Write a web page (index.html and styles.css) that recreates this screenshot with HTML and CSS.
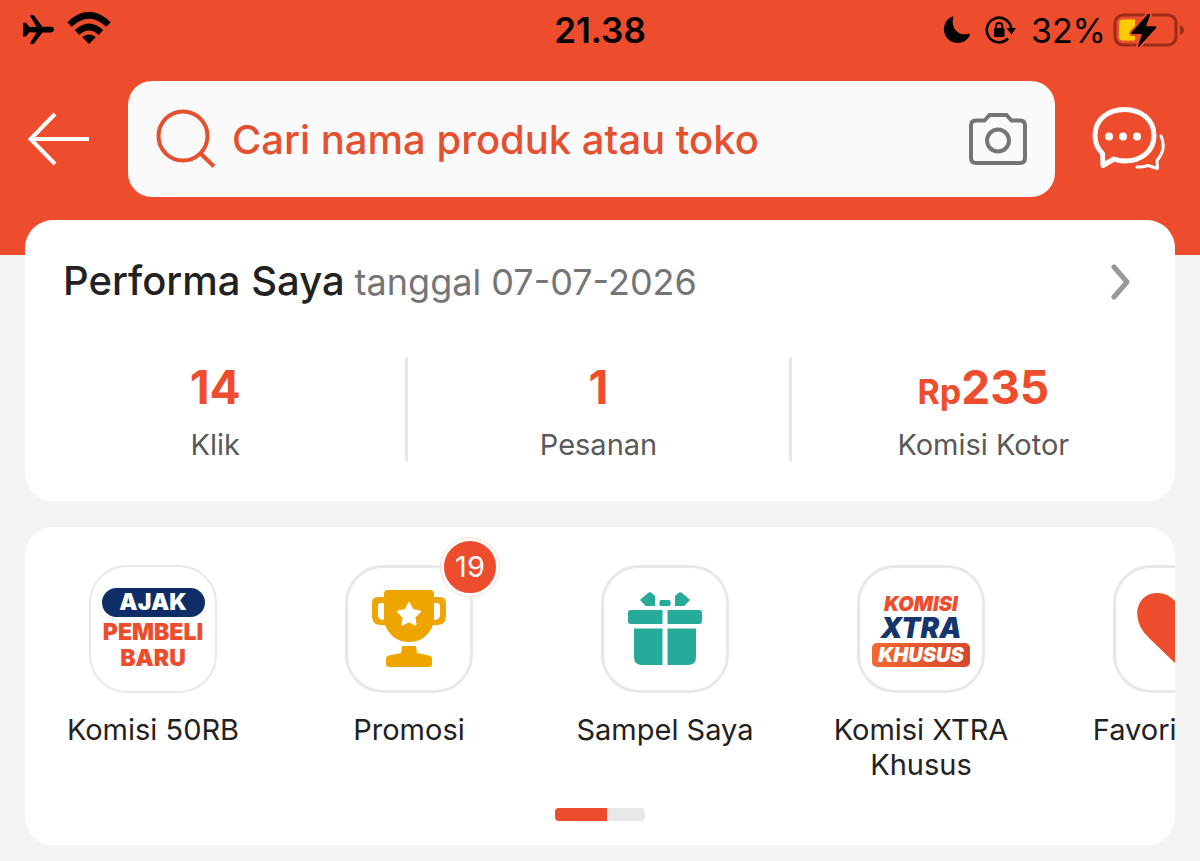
FILE: index.html
```html
<!DOCTYPE html>
<html lang="id">
<head>
  <meta charset="UTF-8">
  <title>Performa Saya</title>
  <meta name="viewport" content="width=device-width, initial-scale=1.0">
  <link rel="stylesheet" href="styles.css">
</head>
<body>

<header class="header">
  <div class="status-bar">
    <div class="status-left">
      <svg width="32" height="30" viewBox="0 0 32 30" aria-hidden="true">
        <path d="M0 8.500q0-.8 1-.8h2l3.500 4.300 7-.3L7.200 1.200Q7 0 8 0h2q.8 0 1.300.8L19.500 11.700h8.500q3 .5 3 2.900t-3 2.900h-8.500L11.300 28.200q-.5.8-1.300.8H8q-1 0-.8-1.200L13.500 17.500l-7-.3L3 21.500H1q-1 0-1-.8V8.500z"/>
      </svg>
      <svg width="44" height="32" viewBox="0 0 44 32" aria-hidden="true">
        <path d="M22 32l-6-6q-1-1 .3-1.800Q22 21 27.700 24.200q1.300.8.3 1.800z"/>
        <path d="M10 20.500Q22 9.500 34 20.500" fill="none" stroke="#000" stroke-width="6.500"/>
        <path d="M2.500 12.500Q22-6 41.500 12.500" fill="none" stroke="#000" stroke-width="6.500"/>
      </svg>
    </div>
    <time class="clock">21.38</time>
    <div class="status-right">
      <svg width="28" height="28" viewBox="0 0 28 28" aria-hidden="true">
        <path d="M9.500.5Q10.500 0 10.300 1.200C7.500 12 15 20.500 26 17.800Q27.500 17.500 27 19A13.700 13.700 0 1 1 9.500.5z"/>
      </svg>
      <svg width="32" height="28" viewBox="0 0 32 28" aria-hidden="true">
        <path d="M26.200 12A12.300 12.300 0 1 0 23 22.500" fill="none" stroke="#000" stroke-width="2.600"/>
        <path d="M21.500 12H31l-4.500 6.500z"/>
        <rect x="9" y="12" width="10.500" height="9" rx="1.500"/>
        <path d="M11 12.500V10q0-3 3.200-3t3.200 3v2.500" fill="none" stroke="#000" stroke-width="1.800"/>
      </svg>
      <span class="percent">32%</span>
      <svg width="72" height="36" viewBox="0 0 72 36" aria-hidden="true">
        <rect x="3" y="3" width="61" height="30" rx="8" fill="none" stroke="#9b2d17" stroke-width="3"/>
        <path d="M68 13q4 1.500 4 5t-4 5z" fill="#9b2d17"/>
        <path d="M11 7.500h12v21H11q-4 0-4-4v-13q0-4 4-4z" fill="#ffcc00"/>
        <path d="M36 2L19.500 20.500q-1 1.500 1 1.500H30l-4 12q-.3 2 1.500.3L44 16q1-1.800-1-1.800H34L38 3q0-2-2-1z" stroke="#ee4d2d" stroke-width="4" stroke-linejoin="round"/>
        <path d="M36 2L19.500 20.500q-1 1.500 1 1.500H30l-4 12q-.3 2 1.500.3L44 16q1-1.800-1-1.800H34L38 3q0-2-2-1z"/>
      </svg>
    </div>
  </div>

  <div class="top-row">
    <a class="back" href="#" aria-label="Kembali">
      <svg width="64" height="54" viewBox="0 0 64 54" fill="none" stroke="#fff" stroke-width="4">
        <path d="M27 2L2.500 27 27 52M3 27h58"/>
      </svg>
    </a>
    <form class="search" role="search">
      <svg width="60" height="60" viewBox="0 0 60 60" fill="none" stroke="#e5502f" stroke-width="4" aria-hidden="true">
        <circle cx="27" cy="27" r="24.500"/>
        <path d="M44 44l14 13.500"/>
      </svg>
      <input class="search-input" type="text" placeholder="Cari nama produk atau toko" aria-label="Cari nama produk atau toko">
      <button class="icon-btn" type="button" aria-label="Cari dengan kamera">
        <svg width="58" height="54" viewBox="0 0 58 54" fill="none" stroke="#757575" stroke-width="4">
          <path d="M7 8.500h8.500L20.500 3h17l5 5.500H51q5 0 5 5V46q0 5-5 5H7q-5 0-5-5V13.500q0-5 5-5z"/>
          <circle cx="29" cy="28.500" r="11"/>
        </svg>
      </button>
    </form>
    <button class="icon-btn" type="button" aria-label="Chat">
      <svg width="74" height="66" viewBox="0 0 74 66" fill="none" stroke="#fff" stroke-width="5" stroke-linejoin="round" stroke-linecap="round">
        <path d="M11.500 47.500Q4 40.500 4 29.500C4 14 16.500 3.500 33.500 3.500S63 14 63 29.500 50.500 55 33.500 55Q28 55 23 53L12 59.500z"/>
        <path d="M70 30Q76 43 66 54.500L66.500 62.500 57 59.500Q51 61.500 46 61" stroke-width="3"/>
        <g fill="#fff" stroke="none">
          <circle cx="18" cy="30.500" r="4"/><circle cx="32" cy="30.500" r="4"/><circle cx="46" cy="30.500" r="4"/>
        </g>
      </svg>
    </button>
  </div>
</header>

<main class="content">
  <section class="card performance">
    <a class="performance-head" href="#">
      <h1>Performa Saya</h1>
      <span class="date">tanggal 07-07-2026</span>
      <svg class="chevron" width="20" height="36" viewBox="0 0 20 36" fill="none" stroke="#999" stroke-width="5" stroke-linecap="round" stroke-linejoin="round" aria-hidden="true">
        <path d="M3 3l13 15L3 33"/>
      </svg>
    </a>
    <div class="stats">
      <div class="stat">
        <strong>14</strong>
        <span>Klik</span>
      </div>
      <div class="stat">
        <strong>1</strong>
        <span>Pesanan</span>
      </div>
      <div class="stat">
        <strong><small>Rp</small>235</strong>
        <span>Komisi Kotor</span>
      </div>
    </div>
  </section>

  <nav class="card menu">
    <div class="menu-list">
      <a class="menu-item" href="#">
        <span class="tile tile-light logo-ajak">
          <span class="ajak-pill">AJAK</span>
          <span>PEMBELI</span>
          <span>BARU</span>
        </span>
        <span class="label">Komisi 50RB</span>
      </a>
      <a class="menu-item" href="#">
        <span class="tile">
          <svg width="74" height="78" viewBox="0 0 74 78" fill="#eea500" aria-hidden="true">
            <path d="M16 0h42q4 0 4 4v3h6q6 0 6 6v13q0 9-9 9h-4Q54 52 37 52T13 35H9q-9 0-9-9V13q0-6 6-6h6V4q0-4 4-4z"/>
            <path d="M12 13H9q-3 0-3 3v9q0 5 6 5zM62 13h3q3 0 3 3v9q0 5-6 5z" fill="#fff"/>
            <path d="M37 13l3.500 7 7.500 1.500-5.500 5.500 1 7.500L37 31l-6.500 3.500 1-7.500-5.500-5.500 7.500-1.500z" fill="#fff" stroke="#fff" stroke-width="2" stroke-linejoin="round"/>
            <path d="M30 56h14l1 7 12 2.500q3 .5 3 3.500v5q0 3-3 3H17q-3 0-3-3v-5q0-3 3-3.500L29 63z"/>
          </svg>
          <span class="badge">19</span>
        </span>
        <span class="label">Promosi</span>
      </a>
      <a class="menu-item" href="#">
        <span class="tile">
          <svg width="74" height="74" viewBox="0 0 74 74" fill="#26aa99" aria-hidden="true">
            <path d="M13 7l7-6q2-1.500 4 .3l3 2.700v10H18.500q-1.500 0-2-1.300L12 8zM61 7l-7-6q-2-1.500-4 .3L47 4v10h8.500q1.500 0 2-1.300L62 8z"/>
            <rect x="31.500" y="8" width="11" height="6" rx="1.500"/>
            <path d="M3 18h31.500v14H3q-3 0-3-3v-8q0-3 3-3zM39.500 18H71q3 0 3 3v8q0 3-3 3H39.500z"/>
            <path d="M6 36.500h28.500V73H14q-8 0-8-8zM39.500 36.500H68V65q0 8-8 8H39.500z"/>
          </svg>
        </span>
        <span class="label">Sampel Saya</span>
      </a>
      <a class="menu-item" href="#">
        <span class="tile logo-xtra">
          <span class="xtra-komisi">KOMISI</span>
          <span class="xtra-word">XTRA</span>
          <span class="xtra-khusus">KHUSUS</span>
        </span>
        <span class="label">Komisi XTRA Khusus</span>
      </a>
      <a class="menu-item" href="#">
        <span class="tile">
          <svg width="84" height="72" viewBox="0 0 84 76" fill="#ee4d2d" aria-hidden="true">
            <path d="M42 76L13 48Q0 36 0 22C0 9 9 0 21 0q13 0 21 11Q50 0 63 0c12 0 21 9 21 22q0 14-13 26z"/>
          </svg>
        </span>
        <span class="label">Favorit Saya</span>
      </a>
    </div>
    <div class="scroll-track"><div class="scroll-thumb"></div></div>
  </nav>
</main>

</body>
</html>
```

FILE: styles.css
```css
* {
  box-sizing: border-box;
}

body {
  margin: 0;
  font-family: Inter, "Liberation Sans", sans-serif;
  background: #f4f4f4;
  color: #222;
}

a {
  color: inherit;
  text-decoration: none;
}

svg {
  display: block;
  flex: none;
}

.header {
  background: #ee4d2d;
  padding-bottom: 58px;
}

/* status bar */
.status-bar {
  display: grid;
  grid-template-columns: 1fr auto 1fr;
  align-items: center;
  height: 60px;
  padding: 0 16px;
  color: #000;
}

.status-left,
.status-right {
  display: flex;
  align-items: center;
  gap: 12px;
}

.status-left {
  padding-left: 7px;
}

.status-left svg:last-child {
  margin-bottom: 4px;
}

.status-right {
  justify-content: flex-end;
}

.status-right svg:nth-child(2) {
  margin-left: 2px;
}

.clock {
  font-size: 35px;
  font-weight: 600;
}

.percent {
  font-size: 34px;
  margin: 0 -6px 0 2px;
}

/* search row */
.top-row {
  display: flex;
  align-items: center;
  padding: 21px 35px 0 28px;
  gap: 36px;
}

.search {
  flex: 1;
  display: flex;
  align-items: center;
  gap: 16px;
  height: 116px;
  min-width: 0;
  padding: 0 28px;
  background: #fafafa;
  border-radius: 24px;
}

.search-input {
  flex: 1;
  min-width: 0;
  border: none;
  outline: none;
  padding: 0;
  background: transparent;
  font-family: inherit;
  font-size: 40px;
  font-weight: 500;
  color: #ee4d2d;
}

.search-input::placeholder {
  color: #e5502f;
  opacity: 1;
}

.icon-btn {
  padding: 0;
  border: none;
  background: none;
  cursor: pointer;
}

/* cards */
.content {
  position: relative;
  display: flex;
  flex-direction: column;
  gap: 26px;
  margin-top: -35px;
  padding: 0 25px 16px;
}

.card {
  background: #fff;
  border-radius: 28px;
}

.performance {
  padding: 33px 0 39px;
}

.performance-head {
  display: flex;
  align-items: baseline;
  gap: 10px;
  padding: 0 44px 0 38px;
  line-height: 56px;
}

.performance-head h1 {
  margin: 0;
  font-size: 40px;
  font-weight: 500;
}

.date {
  font-size: 36px;
  color: #757575;
}

.chevron {
  align-self: center;
  margin-left: auto;
}

.stats {
  display: grid;
  grid-template-columns: repeat(3, 1fr);
  margin-top: 47px;
}

.stat {
  display: flex;
  flex-direction: column;
  align-items: center;
  height: 105px;
  border-right: 3px solid #e8e8e8;
}

.stat:last-child {
  border-right: none;
}

.stat strong {
  font-size: 46px;
  font-weight: 700;
  line-height: 60px;
  color: #ee4d2d;
}

.stat small {
  font-size: 34px;
  line-height: 1;
}

.stat span {
  margin-top: 10px;
  font-size: 29px;
  line-height: 36px;
  color: #595959;
}

/* shortcut menu */
.menu {
  overflow: hidden;
  padding: 38px 0 24px;
}

.menu-list {
  display: flex;
}

.menu-item {
  flex: 0 0 256px;
  display: flex;
  flex-direction: column;
  align-items: center;
  gap: 19px;
}

.tile {
  position: relative;
  display: flex;
  flex-direction: column;
  align-items: center;
  justify-content: center;
  width: 128px;
  height: 128px;
  border: 3px solid #e8e8e8;
  border-radius: 38px;
}

.tile-light {
  border-width: 2px;
}

.label {
  width: 200px;
  font-size: 29px;
  line-height: 35px;
  text-align: center;
}

.badge {
  position: absolute;
  top: -30px;
  right: -29px;
  width: 58px;
  height: 58px;
  border: 3px solid #fff;
  border-radius: 50%;
  outline: 1px solid #fbdcd5;
  background: #ee4d2d;
  color: #fff;
  font-size: 29px;
  line-height: 52px;
  text-align: center;
}

.logo-ajak,
.logo-xtra {
  font-weight: 900;
}

.logo-ajak {
  font-size: 23px;
  line-height: 26px;
  color: #ee4d2d;
}

.ajak-pill {
  width: 103px;
  height: 29px;
  margin-bottom: 2px;
  border-radius: 15px;
  background: #0f2d66;
  color: #fff;
  line-height: 29px;
  text-align: center;
}

.logo-xtra {
  font-style: italic;
  font-size: 20px;
  line-height: 24px;
}

.xtra-komisi {
  color: #ee4d2d;
}

.xtra-word {
  font-size: 28px;
  color: #15356f;
}

.xtra-khusus {
  margin-top: 3px;
  padding: 0 6px;
  border-radius: 5px;
  background: linear-gradient(90deg, #f4692f, #d9472b);
  color: #fff;
}

.scroll-track {
  width: 90px;
  height: 13px;
  margin: 26px auto 0;
  border-radius: 4px;
  background: #e8e8e8;
  overflow: hidden;
}

.scroll-thumb {
  width: 52px;
  height: 100%;
  background: #ee4d2d;
}
```
